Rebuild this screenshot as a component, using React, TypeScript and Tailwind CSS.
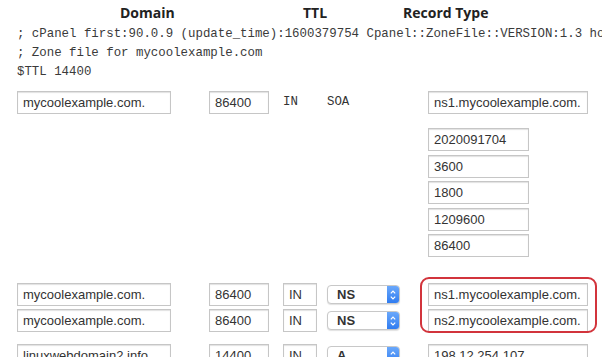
import React from "react";

const mono = "font-['Liberation_Mono',monospace]";
const sans = "font-['Liberation_Sans',Arial,sans-serif]";

const boxClass = `h-[23px] border border-[#c6c6c6] bg-white px-[5px] text-[13px] leading-[21px] text-[#333] shadow-[inset_0_1px_1px_rgba(0,0,0,0.12)] ${sans}`;

function Field({ value, width }: { value: string; width: string }) {
  return (
    <div className={`${boxClass} ${width} overflow-hidden whitespace-nowrap`}>{value}</div>
  );
}

function Select({ value }: { value: string }) {
  return (
    <div className="flex h-[19px] w-[73px] items-stretch rounded-[4px] border border-[#c8c8c8] bg-white shadow-[0_1px_1px_rgba(0,0,0,0.12)]">
      <span className={`flex-1 pl-[9px] text-[13px] font-bold leading-[17px] text-[#333] ${sans}`}>
        {value}
      </span>
      <span className="flex w-[12px] flex-col items-center justify-center gap-[2px] rounded-r-[3px] bg-gradient-to-b from-[#6aa8fb] to-[#2f7cf0]">
        <svg width="6" height="4" viewBox="0 0 6 4">
          <path d="M0.8 3.3 L3 1 L5.2 3.3" stroke="white" strokeWidth="1.2" fill="none" />
        </svg>
        <svg width="6" height="4" viewBox="0 0 6 4">
          <path d="M0.8 0.7 L3 3 L5.2 0.7" stroke="white" strokeWidth="1.2" fill="none" />
        </svg>
      </span>
    </div>
  );
}

const rowGrid = "grid grid-cols-[192px_74px_44px_101px_160px] items-center pl-[17px]";

const nsRows = [
  { domain: "mycoolexample.com.", target: "ns1.mycoolexample.com." },
  { domain: "mycoolexample.com.", target: "ns2.mycoolexample.com." },
];

const soaValues = ["2020091704", "3600", "1800", "1209600", "86400"];

export default function App() {
  return (
    <div className="h-[357px] w-[602px] overflow-hidden bg-white text-[#333]">
      <div className="grid h-[25px] grid-cols-[183px_100px_auto] items-center pl-[120px] font-['Open_Sans',sans-serif] text-[14px] font-bold text-[#222]">
        <span>Domain</span>
        <span>TTL</span>
        <span>Record Type</span>
      </div>

      <div className={`whitespace-nowrap pl-[17px] text-[12.4px] leading-[19px] text-[#3a3a3a] ${mono}`}>
        <div>; cPanel first:90.0.9 (update_time):1600379754 Cpanel::ZoneFile::VERSION:1.3 hostname:</div>
        <div>; Zone file for mycoolexample.com</div>
        <div>$TTL 14400</div>
      </div>

      <div className={`${rowGrid} mt-[9px]`}>
        <Field value="mycoolexample.com." width="w-[154px]" />
        <Field value="86400" width="w-[60px]" />
        <span className={`text-[12.4px] ${mono}`}>IN</span>
        <span className={`text-[12.4px] ${mono}`}>SOA</span>
        <Field value="ns1.mycoolexample.com." width="w-[160px]" />
      </div>

      <div className={`${rowGrid} mt-[14px]`}>
        <div className="col-start-5 flex flex-col gap-[3.5px]">
          {soaValues.map((v) => (
            <Field key={v} value={v} width="w-[101px]" />
          ))}
        </div>
      </div>

      <div className="relative mt-[26px] flex flex-col gap-[3px]">
        {nsRows.map((row) => (
          <div key={row.target} className={rowGrid}>
            <Field value={row.domain} width="w-[154px]" />
            <Field value="86400" width="w-[60px]" />
            <Field value="IN" width="w-[34px]" />
            <Select value="NS" />
            <Field value={row.target} width="w-[160px]" />
          </div>
        ))}
        <div className="pointer-events-none absolute left-[420px] top-[-6px] h-[56px] w-[177px] rounded-[9px] border-2 border-[#d2343c]" />
      </div>

      <div className={`${rowGrid} mt-[12px]`}>
        <Field value="linuxwebdomain2.info" width="w-[154px]" />
        <Field value="14400" width="w-[60px]" />
        <Field value="IN" width="w-[34px]" />
        <Select value="A" />
        <Field value="198.12.254.107" width="w-[160px]" />
      </div>
    </div>
  );
}
